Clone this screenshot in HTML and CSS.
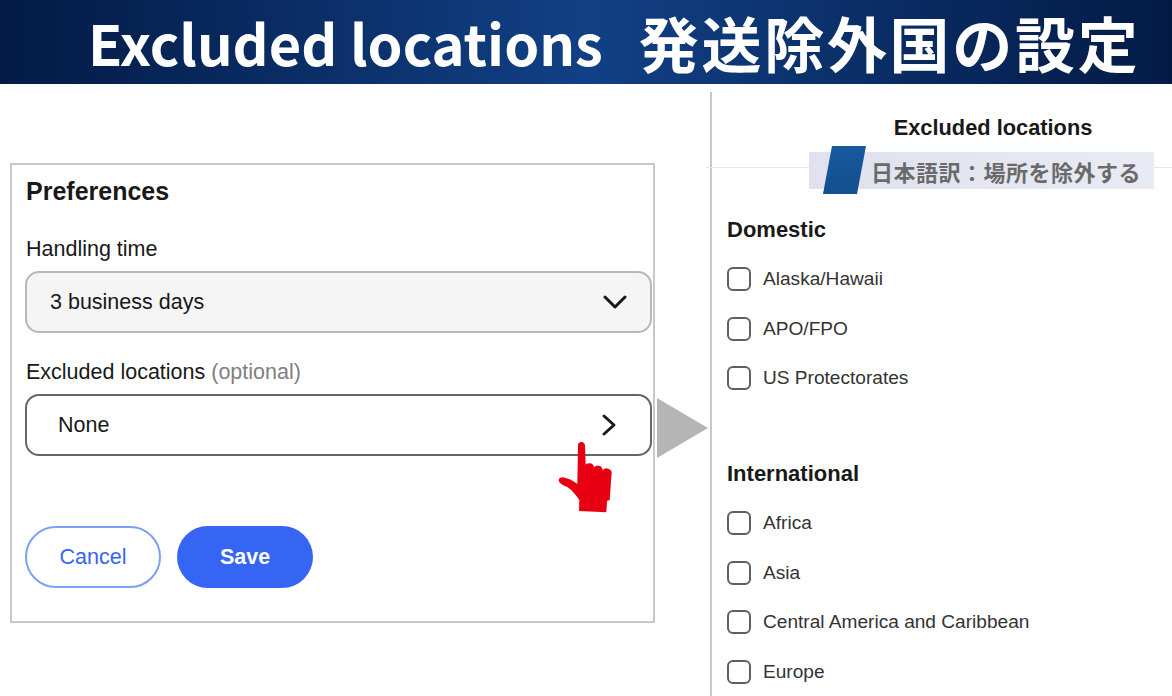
FILE: index.html
```html
<!DOCTYPE html>
<html lang="en">
<head>
  <meta charset="UTF-8" />
  <title>Excluded locations</title>
  <link rel="stylesheet" href="styles.css">
</head>
<body>

  <header class="banner">
    <h1 class="banner-en">Excluded locations</h1>
    <span class="banner-ja">発送除外国の設定</span>
  </header>

  <main class="page">
    <section class="left">
      <div class="card">
        <h2 class="card-title">Preferences</h2>

        <div class="field-label">Handling time</div>
        <div class="select">
          <span>3 business days</span>
          <svg class="chevron" width="24" height="16" viewBox="0 0 24 16"><path d="M2 3l10 10L22 3" fill="none" stroke="#191919" stroke-width="3" stroke-linecap="round" stroke-linejoin="round"/></svg>
        </div>

        <div class="field-label second">Excluded locations <span class="optional">(optional)</span></div>
        <div class="select link">
          <span>None</span>
          <svg class="chevron-right" width="16" height="24" viewBox="0 0 16 24"><path d="M3 3l10 9L3 21" fill="none" stroke="#191919" stroke-width="3" stroke-linecap="round" stroke-linejoin="round"/></svg>
        </div>

        <div class="actions">
          <button class="btn cancel">Cancel</button>
          <button class="btn save">Save</button>
        </div>
      </div>
    </section>

    <section class="right">
      <div class="panel-title">Excluded locations</div>
      <div class="panel-body">
        <h3 class="group-title">Domestic</h3>
        <label class="row"><span class="check"></span>Alaska/Hawaii</label>
        <label class="row"><span class="check"></span>APO/FPO</label>
        <label class="row"><span class="check"></span>US Protectorates</label>

        <h3 class="group-title intl">International</h3>
        <label class="row"><span class="check"></span>Africa</label>
        <label class="row"><span class="check"></span>Asia</label>
        <label class="row"><span class="check"></span>Central America and Caribbean</label>
        <label class="row"><span class="check"></span>Europe</label>
      </div>
    </section>

    <!-- overlays added on top of the screenshot -->
    <div class="arrow"></div>
    <svg class="hand" width="57" height="74" viewBox="80 180 171 222"><path d="M143 195Q144 186 153 186Q163 187 164 196L166 254Q168 250 178 250Q190 251 191 262Q197 255 206 257Q216 259 217 270Q224 263 234 266Q244 269 244 278L238 360L230 363L228 397L146 393L147 360Q130 335 112 322Q88 312 85 302Q84 292 98 292Q120 296 141 312Z" fill="#e60012"/></svg>
    <div class="ribbon">
      <div class="ribbon-mark"></div>
      <span class="ribbon-text">日本語訳：場所を除外する</span>
    </div>
  </main>

</body>
</html>
```

FILE: styles.css
```css
body {
  margin: 0;
  height: 696px;
  overflow: hidden;
  background: #fff;
  color: #191919;
  font-family: "Liberation Sans", Arial, sans-serif;
}

.banner {
  height: 84px;
  display: flex;
  align-items: center;
  padding-left: 88px;
  background: linear-gradient(90deg, #031a45 0%, #114085 50%, #031a45 100%);
  color: #fff;
  font-family: "Noto Sans CJK JP", "Noto Sans", sans-serif;
  font-weight: 700;
  font-size: 56px;
  line-height: 1.300;
  white-space: nowrap;
}

.banner-en {
  margin: 0;
  font: inherit;
}

.banner-ja {
  margin-left: 36px;
  font-size: 60px;
  letter-spacing: 2.700px;
}

.page {
  position: relative;
  display: flex;
  height: 612px;
}

.left {
  width: 711px;
  flex: none;
  padding: 79px 0 0 10px;
  box-sizing: border-box;
}

.card {
  width: 645px;
  height: 460px;
  box-sizing: border-box;
  border: 2px solid #c8c8c8;
  padding: 0 1px 0 13px;
}

.card-title {
  margin: 11px 0 0 1px;
  font-size: 25px;
  line-height: 30px;
  font-weight: 700;
}

.field-label {
  margin: 29px 0 0 1px;
  font-size: 21.500px;
  line-height: 28px;
}

.field-label.second {
  margin-top: 25px;
}

.optional {
  color: #808080;
}

.select {
  display: flex;
  justify-content: space-between;
  align-items: center;
  height: 62px;
  margin-top: 8px;
  padding: 0 23px;
  box-sizing: border-box;
  border: 2px solid #b8b8b8;
  border-radius: 14px;
  background: #f5f5f5;
  font-size: 21.500px;
}

.select.link {
  padding: 0 33px 0 31px;
  border-color: #666;
  background: #fff;
}

.actions {
  display: flex;
  gap: 16px;
  margin-top: 70px;
}

.btn {
  width: 136px;
  height: 62px;
  border-radius: 31px;
  font-family: inherit;
  font-size: 21.500px;
  cursor: pointer;
}

.btn.cancel {
  border: 2px solid #7d9ff6;
  background: #fff;
  color: #3665f3;
}

.btn.save {
  border: none;
  background: #3665f3;
  color: #fff;
  font-weight: 700;
}

.right {
  flex: 1;
  margin-top: 8px;
  border-left: 2px solid #c8c8c8;
  margin-left: -1px;
}

.panel-title {
  height: 76px;
  box-sizing: border-box;
  padding: 23px 0 0 108px;
  margin-left: -6px;
  border-bottom: 1px solid #e8e8e8;
  text-align: center;
  font-size: 21.800px;
  line-height: 26px;
  font-weight: 700;
}

.panel-body {
  padding: 49px 0 0 15px;
}

.group-title {
  margin: 0;
  font-size: 22px;
  line-height: 26px;
  font-weight: 700;
}

.group-title.intl {
  margin-top: 71px;
}

.row {
  display: flex;
  align-items: center;
  gap: 12px;
  height: 24px;
  margin-top: 25.500px;
  font-size: 19.100px;
  color: #333;
}

.group-title + .row {
  margin-top: 24px;
}

.check {
  width: 24px;
  height: 24px;
  box-sizing: border-box;
  border: 2px solid #5f5f5f;
  border-radius: 6px;
  background: #fff;
}

.arrow {
  position: absolute;
  left: 657px;
  top: 314px;
  width: 0;
  height: 0;
  border-left: 51px solid #b5b5b5;
  border-top: 30px solid transparent;
  border-bottom: 30px solid transparent;
}

.hand {
  position: absolute;
  left: 557px;
  top: 356px;
}

.ribbon {
  position: absolute;
  left: 809px;
  top: 68px;
  width: 345px;
  height: 37px;
  display: flex;
  align-items: center;
  justify-content: flex-end;
  padding-right: 13px;
  box-sizing: border-box;
  background: linear-gradient(90deg, #dfe2ee, #e8eaf4);
}

.ribbon-mark {
  position: absolute;
  left: 14px;
  top: -6px;
  width: 43px;
  height: 48px;
  background: linear-gradient(180deg, #175a9e, #124f8f);
  clip-path: polygon(21% 0, 100% 0, 79% 100%, 0 100%);
}

.ribbon-text {
  font-family: "Noto Sans CJK JP", sans-serif;
  font-size: 22px;
  font-weight: 700;
  letter-spacing: 0.500px;
  color: #6a6a6a;
}
```
